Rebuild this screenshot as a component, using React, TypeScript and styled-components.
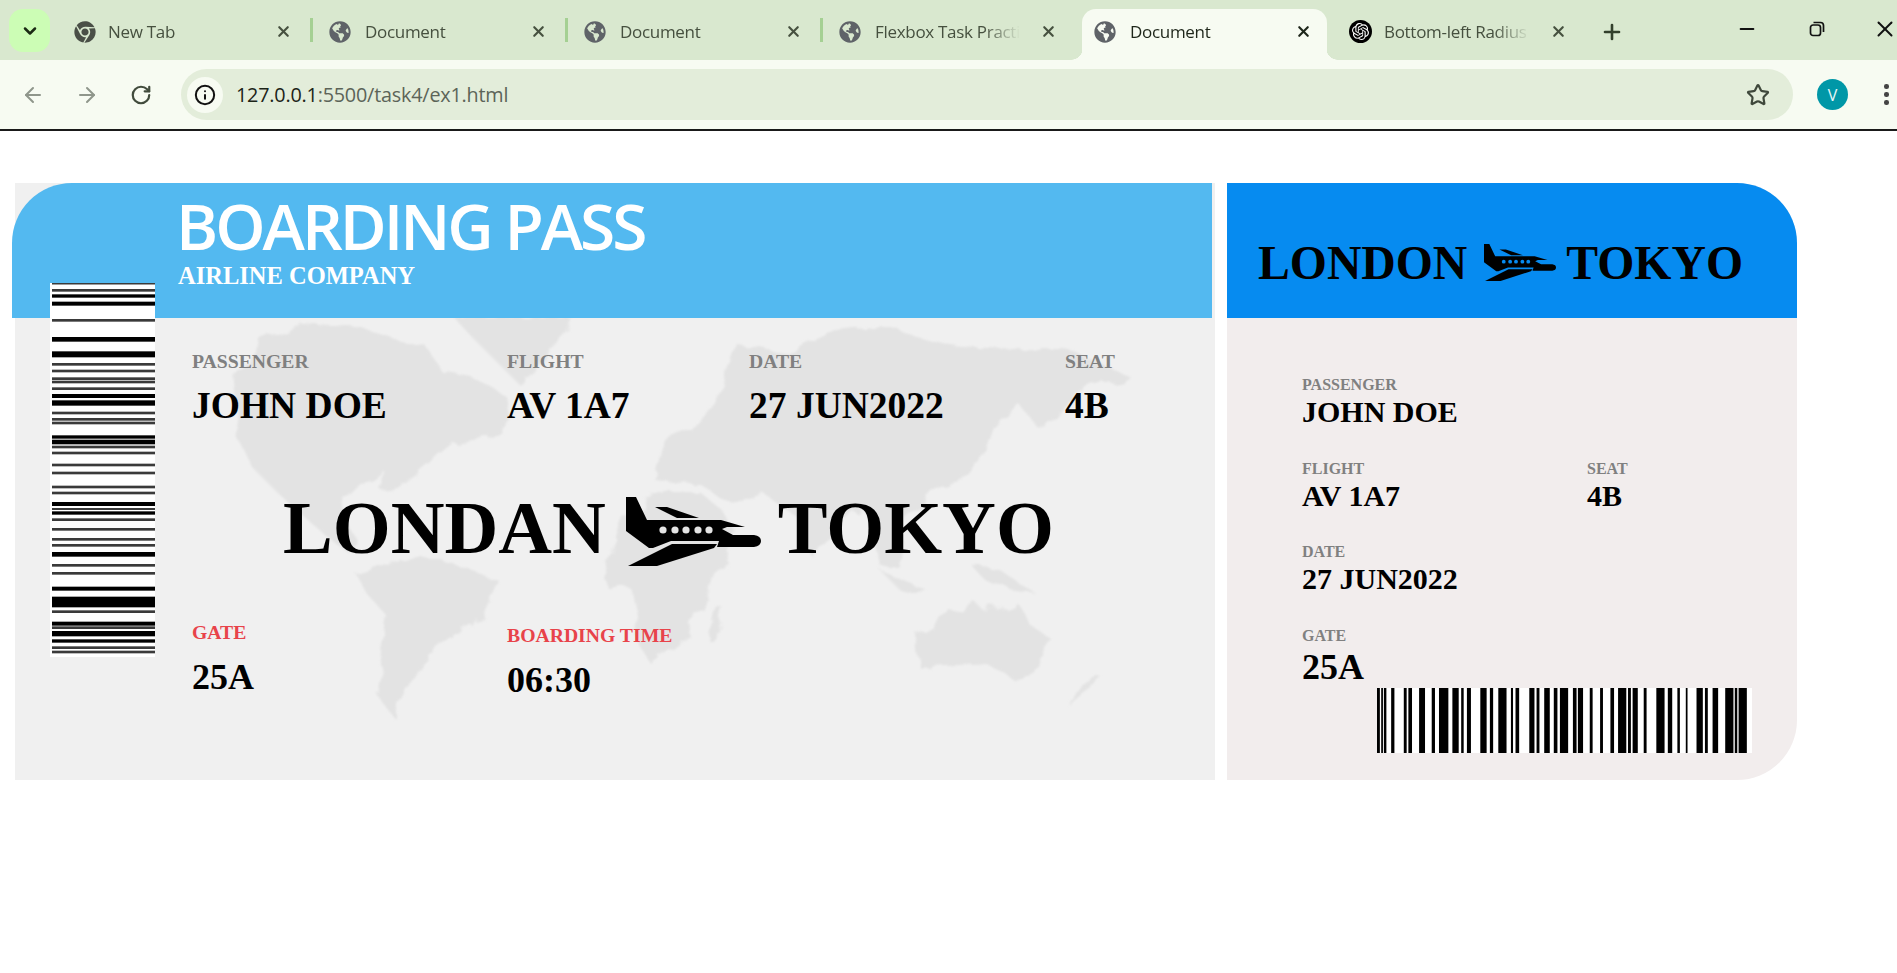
import styled, { createGlobalStyle } from "styled-components";
import { ArrowLeft, ArrowRight, ChevronDown, Info, Minus, Plus, RotateCw, Star, X } from "lucide-react";
import { FaChrome, FaGlobeAmericas } from "react-icons/fa";
import { SiOpenai } from "react-icons/si";

const GlobalStyle = createGlobalStyle`
  html, body {
    margin: 0;
    background: #fff;
  }
  * {
    box-sizing: border-box;
  }
`;

const Page = styled.div`
  width: 1897px;
  height: 973px;
  overflow: hidden;
  font-family: "Liberation Serif", "Times New Roman", serif;
`;

/* browser chrome */
const TabStrip = styled.div`
  height: 60px;
  background: #d9e8cf;
  display: flex;
  font-family: "Open Sans", sans-serif;
`;

const TabMenu = styled.div`
  width: 41px;
  height: 43px;
  margin: 9px 7px 0 9px;
  border-radius: 14px;
  background: #ccfdb5;
  color: #1b2a14;
  display: flex;
  align-items: center;
  justify-content: center;
`;

const Tab = styled.div<{ $sep?: boolean; $active?: boolean }>`
  position: relative;
  width: 255px;
  height: 60px;
  padding: 3px 20px 0 17px;
  display: flex;
  align-items: center;
  gap: 14px;
  color: ${(p) => (p.$active ? "#1e261a" : "#46503f")};
  z-index: ${(p) => (p.$active ? 1 : 0)};
  ${(p) =>
    p.$sep &&
    `&::before {
      content: "";
      position: absolute;
      left: -2px;
      top: 18px;
      width: 3px;
      height: 24px;
      background: #a5d093;
    }`}
  ${(p) =>
    p.$active &&
    `&::after {
      content: "";
      position: absolute;
      left: 5px;
      right: 5px;
      top: 9px;
      bottom: 0;
      background: #f7fbf2;
      border-radius: 14px 14px 0 0;
      z-index: -1;
    }`}
`;

const TabFlare = styled.span<{ $side: "left" | "right" }>`
  position: absolute;
  bottom: 0;
  ${(p) => p.$side}: -6px;
  width: 12px;
  height: 12px;
  background: radial-gradient(
    circle at ${(p) => (p.$side === "left" ? "0 0" : "100% 0")},
    transparent 11.5px,
    #f7fbf2 12px
  );
`;

const TabTitle = styled.span<{ $tight?: boolean }>`
  flex: 1;
  margin-left: ${(p) => (p.$tight ? -2 : 0)}px;
  font-size: 17px;
  letter-spacing: -0.3px;
  white-space: nowrap;
  overflow: hidden;
  -webkit-mask-image: linear-gradient(to right, #000 72%, transparent 96%);
`;

const GptBadge = styled.span`
  width: 23px;
  height: 23px;
  border-radius: 50%;
  background: #000;
  color: #fff;
  display: flex;
  align-items: center;
  justify-content: center;
  flex: none;
`;

const NewTab = styled.div`
  width: 26px;
  height: 60px;
  padding-top: 3px;
  margin-left: 13px;
  color: #33402c;
  display: flex;
  align-items: center;
`;

const WindowControls = styled.div`
  margin: 0 -21px 0 auto;
  display: flex;
  align-items: center;
  height: 60px;
  padding-bottom: 3px;
  color: #111;
`;

const WindowButton = styled.div<{ $w: number }>`
  width: ${(p) => p.$w}px;
  display: flex;
  justify-content: center;
`;

const Toolbar = styled.div`
  height: 71px;
  background: #f7fbf2;
  border-bottom: 2px solid #1a1a1a;
  padding: 9px 0 10px 0;
  display: flex;
  align-items: flex-start;
`;

const NavButton = styled.div<{ $faded?: boolean }>`
  width: 54px;
  height: 51px;
  display: flex;
  align-items: center;
  justify-content: center;
  color: ${(p) => (p.$faded ? "#8f968b" : "#414b3c")};
`;

const NavGroup = styled.div`
  display: flex;
  width: 181px;
  padding-left: 6px;
`;

const Omnibox = styled.div`
  width: 1612px;
  height: 51px;
  border-radius: 26px;
  background: #e3edda;
  padding: 0 23px 0 6px;
  display: flex;
  align-items: center;
  font-family: "Open Sans", sans-serif;
`;

const SiteInfo = styled.div`
  width: 36px;
  height: 36px;
  border-radius: 50%;
  background: #f7fbf2;
  color: #111;
  display: flex;
  align-items: center;
  justify-content: center;
`;

const Url = styled.div`
  flex: 1;
  margin-left: 13px;
  font-size: 19.8px;
  letter-spacing: -0.2px;
  color: #5c6458;
  & b {
    font-weight: 400;
    color: #1c2418;
  }
`;

const Avatar = styled.div`
  width: 31px;
  height: 31px;
  margin: 10px 0 0 24px;
  border-radius: 50%;
  background: #0097a7;
  color: #e8f7f8;
  font: 16px "Open Sans", sans-serif;
  display: flex;
  align-items: center;
  justify-content: center;
`;

const MenuDots = styled.div`
  width: 5px;
  margin: 15px 0 0 36px;
  display: flex;
  flex-direction: column;
  gap: 3.5px;
  & i {
    width: 4.5px;
    height: 4.5px;
    border-radius: 50%;
    background: #444;
  }
`;

/* the pass */
const Ticket = styled.main`
  margin: 52px 0 0 15px;
  display: flex;
  gap: 12px;
`;

const MainPass = styled.section`
  position: relative;
  width: 1200px;
  height: 597px;
  background: #f0f0f0;
`;

const MainHeader = styled.header`
  height: 135px;
  margin: 0 3px 0 -3px;
  padding: 7px 0 0 164px;
  background: #53b9f0;
  border-top-left-radius: 60px;
  color: #fff;
`;

const Title = styled.h1`
  margin: 0;
  font: 600 64px/72px "Open Sans", sans-serif;
  letter-spacing: -3px;
  white-space: nowrap;
`;

const Company = styled.h2`
  margin: 0 0 0 2px;
  font-size: 24.5px;
  line-height: 28px;
  font-weight: 700;
`;

const SideBarcode = styled.svg`
  position: absolute;
  left: 35px;
  top: 100px;
  width: 105px;
  height: 374px;
  background: #fff;
  z-index: 2;
  filter: blur(0.5px);
`;

const MainBody = styled.div`
  position: relative;
  height: 462px;
  padding: 30px 0 0 177px;
`;

const WorldMap = styled.svg`
  position: absolute;
  inset: 0;
  width: 100%;
  height: 100%;
`;

const FieldRow = styled.div`
  position: relative;
  display: grid;
  grid-template-columns: 315px 242px 316px auto;
`;

const Field = styled.div<{ $drop?: number }>`
  padding-top: ${(p) => p.$drop ?? 0}px;
`;

const BigLabel = styled.div<{ $alert?: boolean }>`
  font-size: 19.7px;
  line-height: 26px;
  font-weight: 700;
  color: ${(p) => (p.$alert ? "#e8434a" : "#808080")};
`;

const BigValue = styled.div<{ $small?: boolean }>`
  margin-top: 10px;
  font-size: ${(p) => (p.$small ? 36 : 37.5)}px;
  line-height: 44px;
  font-weight: 700;
  color: #000;
`;

const Route = styled.div<{ $size: number; $gap: number }>`
  position: relative;
  display: flex;
  align-items: center;
  font-size: ${(p) => p.$size}px;
  font-weight: 700;
  color: #000;
  white-space: nowrap;
  gap: ${(p) => p.$gap}px;
`;

const MainRoute = styled(Route)`
  margin: 58px 0 49px 91px;
  height: 84px;
  & svg {
    margin: 7px -3px 0 0;
  }
`;

const StubRoute = styled(Route)`
  & svg {
    margin: 0 -4px 0 3px;
  }
`;

const PlaneIcon = styled.svg<{ $w: number; $h: number; $windows: string }>`
  width: ${(p) => p.$w}px;
  height: ${(p) => p.$h}px;
  flex: none;
  fill: #000;
  & circle {
    fill: ${(p) => p.$windows};
  }
`;

const StubPass = styled.section`
  width: 570px;
  height: 597px;
  background: #f2eded;
  border-radius: 0 60px 60px 0;
`;

const StubHeader = styled.header`
  height: 135px;
  padding: 24px 0 0 31px;
  background: #068bf0;
  border-top-right-radius: 60px;
  display: flex;
  align-items: center;
`;

const StubBody = styled.div`
  padding: 56px 0 0 75px;
  display: flex;
  flex-direction: column;
`;

const StubRow = styled.div`
  display: grid;
  grid-template-columns: 285px 1fr;
  margin-bottom: 28.5px;
`;

const StubLabel = styled.div`
  font-size: 16px;
  line-height: 21px;
  font-weight: 700;
  color: #808080;
`;

const StubValue = styled.div<{ $large?: boolean }>`
  margin-top: ${(p) => (p.$large ? 1.5 : 0)}px;
  font-size: ${(p) => (p.$large ? 36 : 30)}px;
  line-height: ${(p) => (p.$large ? 40 : 34)}px;
  font-weight: 700;
  color: #000;
`;

const StubBarcode = styled.svg`
  width: 375px;
  height: 65px;
  margin: 1px 0 0 75px;
  background: #fff;
`;

const sideBars: [number, number][] = [
  [30, 3], [50, 6], [67, 8], [90, 10], [140, 6], [197, 12], [242, 16], [272, 6], [292, 6],
  [315, 6], [325, 6], [345, 6], [367, 10], [388, 14], [418, 6], [437, 6], [448, 6], [490, 8],
  [505, 12], [520, 6], [538, 6], [574, 6], [598, 6], [640, 6], [658, 6], [691, 10], [706, 4],
  [718, 8], [738, 6], [767, 6], [797, 6], [815, 6], [842, 12], [875, 6], [899, 6], [945, 10],
  [985, 30], [1014, 6], [1050, 10], [1062, 6], [1080, 14], [1102, 8], [1122, 6], [1135, 6],
];

const stubBars: [number, number][] = [
  [410, 6], [421, 3], [428, 5], [447, 7], [480, 6], [492, 8], [520, 14], [553, 7], [572, 23],
  [607, 15], [630, 5], [645, 9], [680, 15], [705, 7], [727, 20], [760, 4], [772, 8], [808, 12],
  [827, 6], [847, 13], [872, 8], [888, 20], [922, 8], [935, 12], [966, 6], [993, 6], [1020, 8],
  [1040, 20], [1066, 6], [1078, 12], [1107, 6], [1140, 20], [1170, 10], [1195, 5], [1217, 3],
  [1245, 15], [1267, 6], [1287, 13], [1320, 20], [1345, 5], [1355, 20],
];

const continents = [
  "232,372 262,340 300,322 345,325 395,340 425,345 440,370 470,375 505,395 510,420 480,440 450,445 420,470 395,490 378,488 385,470 360,488 340,495 345,520 362,545 352,556 320,530 285,500 255,470 240,440 235,400",
  "455,318 572,318 560,345 520,385 495,360 470,335",
  "355,573 400,560 446,560 498,580 482,617 446,640 420,665 402,700 393,717 375,693 388,617 366,593",
  "603,577 625,520 655,492 700,492 722,510 737,533 715,575 705,610 680,640 650,663 638,640 632,590 610,590",
  "655,480 665,440 700,425 720,395 737,345 790,352 830,333 882,327 950,345 1015,350 1065,350 1131,377 1090,385 1040,430 1020,405 994,427 985,455 961,483 932,490 905,520 900,567 882,567 865,510 840,520 815,560 795,515 760,490 735,505 700,485",
  "915,633 973,600 985,612 1015,600 1030,625 1052,640 1040,670 1015,680 985,662 919,667",
  "973,567 1000,570 1035,593 1020,590 990,585",
  "880,570 925,588 900,590",
  "1098,673 1085,695 1071,707 1078,692 1092,672",
  "714,612 722,606 716,640 708,640",
];

const Plane = ({ w, h, windows }: { w: number; h: number; windows: string }) => (
  <PlaneIcon $w={w} $h={h} $windows={windows} viewBox="17 18 135 69">
    <path d="M17 18H27L38 41H112L136 48H118L113 50L124 56H145Q152 57 152 62Q152 67 145 68H108L110 62H62L44 69H40L17 52Z" />
    <path d="M63 65H108L105 69L48 87H19Z" />
    <path d="M46 28H58L90 39H68Z" />
    {[54, 66, 77, 89, 100].map((x) => (
      <circle key={x} cx={x} cy={51} r={3.6} />
    ))}
  </PlaneIcon>
);

const RestoreIcon = () => (
  <svg width="16" height="16" viewBox="0 0 16 16" fill="none" stroke="currentColor" strokeWidth="1.7">
    <rect x="1.5" y="4" width="10" height="10.5" rx="2.5" />
    <path d="M4.5 1.5H11.5Q14.5 1.5 14.5 4.5V11" />
  </svg>
);

const tabs = [
  { title: "New Tab", icon: "chrome", tight: true },
  { title: "Document", icon: "globe", sep: true },
  { title: "Document", icon: "globe", sep: true },
  { title: "Flexbox Task Practice", icon: "globe", sep: true },
  { title: "Document", icon: "globe", active: true },
  { title: "Bottom-left Radius Generator", icon: "gpt", tight: true },
];

const App = () => {
  return (
    <Page>
      <GlobalStyle />
      <TabStrip>
        <TabMenu>
          <ChevronDown size={20} strokeWidth={3} />
        </TabMenu>
        {tabs.map((tab, i) => (
          <Tab key={i} $sep={tab.sep} $active={tab.active}>
            {tab.active && <TabFlare $side="left" />}
            {tab.active && <TabFlare $side="right" />}
            {tab.icon === "chrome" && <FaChrome size={22} color="#4a4f47" style={{ flex: "none" }} />}
            {tab.icon === "globe" && <FaGlobeAmericas size={22} color="#5f6368" style={{ flex: "none" }} />}
            {tab.icon === "gpt" && (
              <GptBadge>
                <SiOpenai size={17} />
              </GptBadge>
            )}
            <TabTitle $tight={tab.tight}>{tab.title}</TabTitle>
            <X size={17} strokeWidth={3} />
          </Tab>
        ))}
        <NewTab>
          <Plus size={24} strokeWidth={2.6} />
        </NewTab>
        <WindowControls>
          <WindowButton $w={70}>
            <Minus size={22} strokeWidth={2} />
          </WindowButton>
          <WindowButton $w={70}>
            <RestoreIcon />
          </WindowButton>
          <WindowButton $w={66}>
            <X size={26} strokeWidth={1.8} />
          </WindowButton>
        </WindowControls>
      </TabStrip>
      <Toolbar>
        <NavGroup>
          <NavButton $faded>
            <ArrowLeft size={24} strokeWidth={2} />
          </NavButton>
          <NavButton $faded>
            <ArrowRight size={24} strokeWidth={2} />
          </NavButton>
          <NavButton>
            <RotateCw size={22} strokeWidth={2.4} />
          </NavButton>
        </NavGroup>
        <Omnibox>
          <SiteInfo>
            <Info size={22} strokeWidth={2.2} />
          </SiteInfo>
          <Url>
            <b>127.0.0.1</b>:5500/task4/ex1.html
          </Url>
          <Star size={24} strokeWidth={2.2} color="#3f483b" />
        </Omnibox>
        <Avatar>V</Avatar>
        <MenuDots>
          <i />
          <i />
          <i />
        </MenuDots>
      </Toolbar>

      <Ticket>
        <MainPass>
          <MainHeader>
            <Title>BOARDING PASS</Title>
            <Company>AIRLINE COMPANY</Company>
          </MainHeader>
          <SideBarcode viewBox="30 28 315 1122" preserveAspectRatio="none">
            {sideBars.map(([y, t]) => (
              <rect key={y} x={36} y={y - t / 2 - 1} width={309} height={t + 2} fill={t > 7 ? "#000" : "#3a3a3a"} />
            ))}
          </SideBarcode>
          <MainBody>
            <WorldMap viewBox="15 318 1200 462" preserveAspectRatio="none">
              <defs>
                <filter id="coast" x="-5%" y="-5%" width="110%" height="110%">
                  <feTurbulence type="fractalNoise" baseFrequency="0.035" numOctaves="4" seed="7" result="noise" />
                  <feDisplacementMap in="SourceGraphic" in2="noise" scale="16" />
                  <feGaussianBlur stdDeviation="1.3" />
                </filter>
              </defs>
              <g filter="url(#coast)" fill="#e3e3e3">
                {continents.map((points) => (
                  <polygon key={points} points={points} />
                ))}
              </g>
            </WorldMap>
            <FieldRow>
              <Field>
                <BigLabel>PASSENGER</BigLabel>
                <BigValue>JOHN DOE</BigValue>
              </Field>
              <Field>
                <BigLabel>FLIGHT</BigLabel>
                <BigValue>AV 1A7</BigValue>
              </Field>
              <Field>
                <BigLabel>DATE</BigLabel>
                <BigValue>27 JUN2022</BigValue>
              </Field>
              <Field>
                <BigLabel>SEAT</BigLabel>
                <BigValue>4B</BigValue>
              </Field>
            </FieldRow>
            <MainRoute $size={74.5} $gap={20}>
              LONDAN
              <Plane w={135} h={69} windows="#e4e4e4" />
              TOKYO
            </MainRoute>
            <FieldRow>
              <Field>
                <BigLabel $alert>GATE</BigLabel>
                <BigValue $small>25A</BigValue>
              </Field>
              <Field $drop={3}>
                <BigLabel $alert>BOARDING TIME</BigLabel>
                <BigValue $small>06:30</BigValue>
              </Field>
            </FieldRow>
          </MainBody>
        </MainPass>

        <StubPass>
          <StubHeader>
            <StubRoute $size={47.7} $gap={14}>
              LONDON
              <Plane w={72} h={37} windows="#068bf0" />
              TOKYO
            </StubRoute>
          </StubHeader>
          <StubBody>
            <StubRow>
              <div>
                <StubLabel>PASSENGER</StubLabel>
                <StubValue>JOHN DOE</StubValue>
              </div>
            </StubRow>
            <StubRow>
              <div>
                <StubLabel>FLIGHT</StubLabel>
                <StubValue>AV 1A7</StubValue>
              </div>
              <div>
                <StubLabel>SEAT</StubLabel>
                <StubValue>4B</StubValue>
              </div>
            </StubRow>
            <StubRow>
              <div>
                <StubLabel>DATE</StubLabel>
                <StubValue>27 JUN2022</StubValue>
              </div>
            </StubRow>
            <div>
              <StubLabel>GATE</StubLabel>
              <StubValue $large>25A</StubValue>
            </div>
            <StubBarcode viewBox="410 0 980 65" preserveAspectRatio="none">
              {stubBars.map(([x, w]) => (
                <rect key={x} x={x} y={0} width={w + 1.5} height={65} fill="#000" />
              ))}
            </StubBarcode>
          </StubBody>
        </StubPass>
      </Ticket>
    </Page>
  );
};

export default App;
